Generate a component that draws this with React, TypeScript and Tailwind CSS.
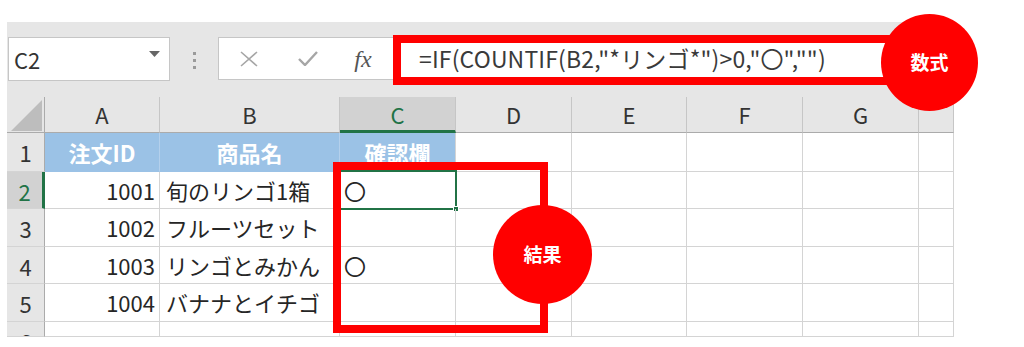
const font = "font-['Noto_Sans_CJK_JP',sans-serif]";

const colWidths = "grid-cols-[38px_115px_180px_116px_116px_115px_116px_116px_35px]";
const rowHeights = "grid-rows-[36px_39px_37px_38px_37px_38px_15px]";

const letters = ["A", "B", "C", "D", "E", "F", "G", ""];

const rows = [
  { n: "1", id: "", name: "", check: "", head: true },
  { n: "2", id: "1001", name: "旬のリンゴ1箱", check: "〇" },
  { n: "3", id: "1002", name: "フルーツセット", check: "" },
  { n: "4", id: "1003", name: "リンゴとみかん", check: "〇" },
  { n: "5", id: "1004", name: "バナナとイチゴ", check: "" },
  { n: "6", id: "", name: "", check: "" },
];

function FormulaBar() {
  return (
    <div className="flex h-[75px] items-start bg-[#e6e6e6] pt-[15px]">
      <div className="ml-[1px] flex h-[44px] w-[162px] items-center justify-between border border-[#c6c6c6] bg-white pl-[5px] pr-[9px]">
        <span className="text-[22px] text-[#333]">C2</span>
        <svg width="11" height="6" viewBox="0 0 11 6" className="-mt-[10px]">
          <path d="M0 0 L11 0 L5.5 6 Z" fill="#666" />
        </svg>
      </div>
      <div className="flex w-[48px] flex-col items-center gap-[4px] pt-[15px]">
        <span className="h-[3px] w-[3px] bg-[#9a9a9a]" />
        <span className="h-[3px] w-[3px] bg-[#9a9a9a]" />
        <span className="h-[3px] w-[3px] bg-[#9a9a9a]" />
      </div>
      <div className="flex h-[43px] flex-1 items-center border border-r-0 border-[#c6c6c6] bg-white">
        <div className="flex w-[60px] justify-center">
          <svg width="18" height="16" viewBox="0 0 18 16">
            <path d="M1 1 L17 15 M17 1 L1 15" stroke="#a6a6a6" strokeWidth="1.6" fill="none" />
          </svg>
        </div>
        <div className="flex w-[58px] justify-center">
          <svg width="20" height="15" viewBox="0 0 20 15">
            <path d="M1 8 L7 14 L19 1" stroke="#a6a6a6" strokeWidth="2.4" fill="none" />
          </svg>
        </div>
        <div className="flex w-[52px] justify-center">
          <span className="font-['Liberation_Serif',serif] text-[24px] italic text-[#555]">fx</span>
        </div>
        <span className="whitespace-nowrap pl-[30px] text-[23px] tracking-[0.15px] text-[#3a3a3a]">
          =IF(COUNTIF(B2,"*リンゴ*")&gt;0,"〇","")
        </span>
      </div>
    </div>
  );
}

function Grid() {
  return (
    <div className={`grid ${colWidths} ${rowHeights} bg-white`}>
      {/* column headers */}
      <div className="relative border-r border-b border-[#ababab] bg-[#e6e6e6]">
        <svg width="31" height="31" viewBox="0 0 31 31" className="absolute bottom-[1px] right-[2px]">
          <path d="M31 0 L31 31 L0 31 Z" fill="#bdbdbd" />
        </svg>
      </div>
      {letters.map((l, i) =>
        l === "C" ? (
          <div
            key={i}
            className="flex items-center justify-center border-r border-b-[3px] border-r-[#c6c6c6] border-b-[#217346] bg-[#d2d2d2] pt-[2px] text-[22px] text-[#217346]"
          >
            {l}
          </div>
        ) : (
          <div
            key={i}
            className="flex items-center justify-center border-r border-b border-r-[#c6c6c6] border-b-[#ababab] bg-[#e6e6e6] text-[22px] text-[#333]"
          >
            {l}
          </div>
        )
      )}

      {rows.map((r) => (
        <Row key={r.n} r={r} />
      ))}
    </div>
  );
}

function Row({ r }: { r: { n: string; id: string; name: string; check: string; head?: boolean } }) {
  const sel = r.n === "2";
  return (
    <>
      <div
        className={`flex items-start justify-center overflow-hidden border-b border-b-[#d4d4d4] pt-[3px] text-[22px] ${
          sel
            ? "border-r-[3px] border-r-[#217346] bg-[#d2d2d2] text-[#217346]"
            : "border-r border-r-[#ababab] bg-[#e6e6e6] text-[#333]"
        }`}
      >
        {r.n}
      </div>
      {r.head ? (
        <>
          <div className="flex items-center justify-center border-r border-b border-r-[#b4d0ec] border-b-[#9bc2e6] bg-[#9bc2e6] text-[22px] font-bold text-white">
            注文ID
          </div>
          <div className="flex items-center justify-center border-r border-b border-r-[#b4d0ec] border-b-[#9bc2e6] bg-[#9bc2e6] text-[22px] font-bold text-white">
            商品名
          </div>
          <div className="flex items-center justify-center border-r border-b border-r-[#d4d4d4] border-b-[#9bc2e6] bg-[#9bc2e6] text-[22px] font-bold text-white">
            確認欄
          </div>
        </>
      ) : (
        <>
          <div className="flex items-center justify-end border-r border-b border-[#d4d4d4] pr-[4px] text-[22px] text-[#262626]">
            {r.id}
          </div>
          <div className="flex items-center whitespace-nowrap border-r border-b border-[#d4d4d4] pl-[6px] text-[22px] text-[#262626]">
            {r.name}
          </div>
          <div className="relative flex items-center border-r border-b border-[#d4d4d4] pl-[4px] text-[22px] text-[#262626]">
            {r.check}
            {sel && (
              <div className="absolute -left-[1px] -top-[2px] h-[40px] w-[118px] border-2 border-[#217346]">
                <span className="absolute -bottom-[4px] -right-[4px] h-[6px] w-[6px] border border-white bg-[#217346]" />
              </div>
            )}
          </div>
        </>
      )}
      {[0, 1, 2, 3, 4].map((i) => (
        <div key={i} className="border-r border-b border-[#d4d4d4]" />
      ))}
    </>
  );
}

export default function App() {
  return (
    <div className={`relative h-[347px] w-[1024px] overflow-hidden bg-white ${font}`}>
      <div className="ml-[7px] mt-[22px] w-[947px]">
        <FormulaBar />
        <Grid />
      </div>

      {/* annotations */}
      <div className="absolute left-[393px] top-[35px] h-[50px] w-[512px] border-[8px] border-[#ff0000]" />
      <div className="absolute left-[881px] top-[14px] flex h-[97px] w-[97px] items-center justify-center rounded-full bg-[#ff0000] text-[19px] font-bold text-white">
        数式
      </div>
      <div className="absolute left-[333px] top-[162px] h-[171px] w-[215px] border-[8px] border-[#ff0000]" />
      <div className="absolute left-[493px] top-[205px] flex h-[99px] w-[99px] items-center justify-center rounded-full bg-[#ff0000] text-[19px] font-bold text-white">
        結果
      </div>
    </div>
  );
}
